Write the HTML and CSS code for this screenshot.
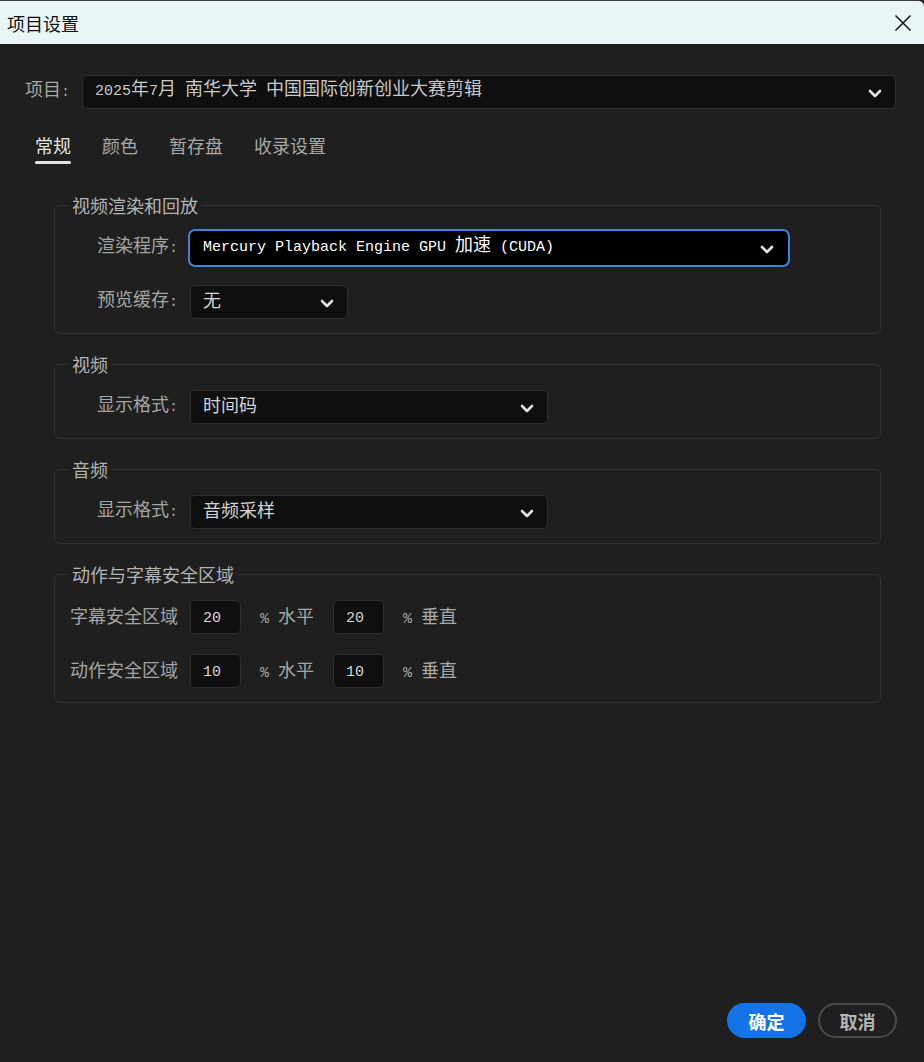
FILE: index.html
```html
<!DOCTYPE html>
<html lang="zh-CN">
<head>
<meta charset="utf-8">
<title>项目设置</title>
<link rel="stylesheet" href="styles.css">
</head>
<body>
<div class="window">
  <header class="titlebar">
    <span class="title">项目设置</span>
    <button class="close" aria-label="关闭">
      <svg width="18" height="18" viewBox="0 0 18 18"><path d="M1.5 1.5L16.5 16.5M16.5 1.5L1.5 16.5" stroke="#1c1c1c" stroke-width="1.6" fill="none"/></svg>
    </button>
  </header>

  <main class="content">
    <div class="project-row">
      <span class="project-label">项目<span class="mono">:</span></span>
      <div class="select project-select">
        <span class="select-text"><span class="mono">2025</span>年<span class="mono">7</span>月<span class="mono"> </span>南华大学<span class="mono"> </span>中国国际创新创业大赛剪辑</span>
        <svg class="chev" width="14" height="9" viewBox="0 0 14 9"><path d="M2 2l5 5 5-5"/></svg>
      </div>
    </div>

    <nav class="tabs">
      <span class="tab active">常规</span>
      <span class="tab">颜色</span>
      <span class="tab">暂存盘</span>
      <span class="tab">收录设置</span>
    </nav>

    <div class="groups">
      <fieldset class="group">
        <legend>视频渲染和回放</legend>
        <div class="rows">
          <div class="row">
            <span class="label">渲染程序<span class="mono">:</span></span>
            <div class="select focused w-render">
              <span class="select-text"><span class="mono">Mercury Playback Engine GPU </span>加速<span class="mono"> (CUDA)</span></span>
              <svg class="chev" width="14" height="9" viewBox="0 0 14 9"><path d="M2 2l5 5 5-5"/></svg>
            </div>
          </div>
          <div class="row">
            <span class="label">预览缓存<span class="mono">:</span></span>
            <div class="select w-small">
              <span class="select-text">无</span>
              <svg class="chev" width="14" height="9" viewBox="0 0 14 9"><path d="M2 2l5 5 5-5"/></svg>
            </div>
          </div>
        </div>
      </fieldset>

      <fieldset class="group">
        <legend>视频</legend>
        <div class="rows">
          <div class="row">
            <span class="label">显示格式<span class="mono">:</span></span>
            <div class="select w-mid">
              <span class="select-text">时间码</span>
              <svg class="chev" width="14" height="9" viewBox="0 0 14 9"><path d="M2 2l5 5 5-5"/></svg>
            </div>
          </div>
        </div>
      </fieldset>

      <fieldset class="group">
        <legend>音频</legend>
        <div class="rows">
          <div class="row">
            <span class="label">显示格式<span class="mono">:</span></span>
            <div class="select w-mid">
              <span class="select-text">音频采样</span>
              <svg class="chev" width="14" height="9" viewBox="0 0 14 9"><path d="M2 2l5 5 5-5"/></svg>
            </div>
          </div>
        </div>
      </fieldset>

      <fieldset class="group">
        <legend>动作与字幕安全区域</legend>
        <div class="rows">
          <div class="row">
            <span class="label">字幕安全区域</span>
            <div class="num"><span class="mono">20</span></div>
            <span class="unit"><span class="mono">% </span>水平</span>
            <div class="num"><span class="mono">20</span></div>
            <span class="unit"><span class="mono">% </span>垂直</span>
          </div>
          <div class="row">
            <span class="label">动作安全区域</span>
            <div class="num"><span class="mono">10</span></div>
            <span class="unit"><span class="mono">% </span>水平</span>
            <div class="num"><span class="mono">10</span></div>
            <span class="unit"><span class="mono">% </span>垂直</span>
          </div>
        </div>
      </fieldset>
    </div>
  </main>

  <footer class="footer">
    <button class="btn btn-primary">确定</button>
    <button class="btn btn-secondary">取消</button>
  </footer>
</div>
</body>
</html>
```

FILE: styles.css
```css
* { box-sizing: border-box; }

html, body {
  margin: 0;
  height: 100%;
}

body {
  background: #1f1f1f;
  font-family: "Noto Sans CJK SC", "Noto Sans", sans-serif;
  font-size: 18px;
  line-height: 24px;
  color: #a9a9a9;
}

.mono {
  font-family: "Liberation Mono", "DejaVu Sans Mono", monospace;
  font-size: 15px;
  white-space: pre;
}

.window {
  display: flex;
  flex-direction: column;
  height: 100vh;
}

/* Title bar */
.titlebar {
  height: 44px;
  flex: none;
  background: #e9f5f7;
  border-top: 1px solid #3c3c3c;
  border-top-right-radius: 6px;
  display: flex;
  align-items: center;
  justify-content: space-between;
  padding: 0 12px 0 7px;
}

.title {
  color: #111;
  font-size: 18px;
}

.close {
  background: none;
  border: 0;
  padding: 0;
  width: 18px;
  height: 18px;
  display: flex;
}

/* Content */
.content {
  padding: 31px 28px 0 25px;
}

.project-row {
  display: flex;
  align-items: center;
  gap: 12px;
}

.project-label {
  width: 45px;
  flex: none;
  color: #a6a6a6;
  margin-bottom: 4px;
}

.select {
  height: 34px;
  background: #0f0f0f;
  border: 1px solid #2e2e2e;
  border-radius: 5px;
  display: flex;
  align-items: center;
  justify-content: space-between;
  padding: 0 13px 0 12px;
  color: #d2d2d2;
}

.select-text {
  white-space: nowrap;
  margin-bottom: 6px;
}

.project-select {
  flex: 1;
  color: #c9c9c9;
}

.chev {
  flex: none;
  margin-top: 3px;
}

.chev path {
  fill: none;
  stroke: #e4e4e4;
  stroke-width: 2.6;
  stroke-linecap: round;
  stroke-linejoin: round;
}

/* Tabs */
.tabs {
  display: flex;
  gap: 31px;
  margin: 24px 0 0 10px;
}

.tab {
  color: #a8a8a8;
  padding-bottom: 4px;
  display: flex;
  flex-direction: column;
}

.tab.active {
  color: #e6e6e6;
}

.tab.active::after {
  content: "";
  height: 3px;
  border-radius: 2px;
  background: #e0e0e0;
  margin-top: 4px;
}

.tab:not(.active) {
  padding-bottom: 11px;
}

/* Groups */
.groups {
  display: flex;
  flex-direction: column;
  gap: 18px;
  margin: 25px 15px 0 29px;
}

.group {
  margin: 0;
  padding: 14px 0 14px 11px;
  border: 1px solid #333333;
  border-radius: 6px;
  min-width: 0;
}

.group legend {
  margin-left: 2px;
  padding: 0 4px;
  line-height: 24px;
  color: #b3b3b3;
}

.rows {
  display: flex;
  flex-direction: column;
  gap: 20px;
}

.row {
  display: flex;
  align-items: center;
  height: 34px;
}

.label {
  width: 112px;
  flex: none;
  text-align: right;
  margin: 0 12px 4px 0;
  color: #a4a4a4;
  white-space: nowrap;
}

.focused {
  background: #000;
  border-color: #000;
  outline: 2px solid #3d86d6;
  outline-offset: 0;
  color: #ffffff;
}

.w-render { width: 598px; }
.w-small { width: 158px; }
.w-mid { width: 358px; }

.num {
  width: 51px;
  height: 34px;
  background: #0f0f0f;
  border: 1px solid #2e2e2e;
  border-radius: 5px;
  padding: 0 0 0 12px;
  color: #d6d6d6;
  line-height: 26px;
}

.unit {
  margin: 0 19px 0 19px;
  color: #a8a8a8;
  white-space: nowrap;
}

/* Footer */
.footer {
  margin-top: auto;
  display: flex;
  justify-content: flex-end;
  gap: 12px;
  padding: 0 27px 24px 0;
}

.btn {
  height: 35px;
  width: 79px;
  border-radius: 18px;
  font-family: "Noto Sans CJK SC", "Noto Sans", sans-serif;
  font-size: 18px;
  font-weight: 700;
  padding: 0;
}

.btn-primary {
  background: #1473e6;
  border: 0;
  color: #ffffff;
}

.btn-secondary {
  background: transparent;
  border: 2px solid #4b4b4b;
  color: #b4b4b4;
}
```
